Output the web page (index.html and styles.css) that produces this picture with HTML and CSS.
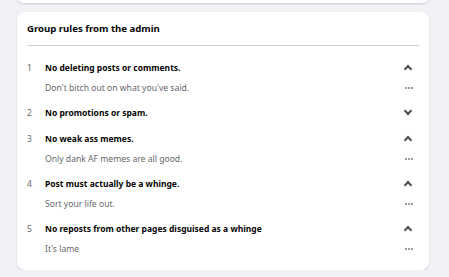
FILE: index.html
```html
<!DOCTYPE html>
<html lang="en">
<head>
  <meta charset="UTF-8" />
  <title>Group rules</title>
  <link rel="stylesheet" href="styles.css">
</head>
<body>
  <div class="card card-above"></div>

  <div class="card rules">
    <h2 class="rules-title">Group rules from the admin</h2>
    <div class="rules-list">
      <div class="rule">
        <div class="rule-head">
          <span class="rule-num">1</span>
          <span class="rule-name">No deleting posts or comments.</span>
          <span class="chev up"></span>
        </div>
        <div class="rule-desc">
          <span>Don't bitch out on what you've said.</span>
          <span class="dots"><i></i><i></i><i></i></span>
        </div>
      </div>
      <div class="rule">
        <div class="rule-head">
          <span class="rule-num">2</span>
          <span class="rule-name">No promotions or spam.</span>
          <span class="chev down"></span>
        </div>
      </div>
      <div class="rule">
        <div class="rule-head">
          <span class="rule-num">3</span>
          <span class="rule-name">No weak ass memes.</span>
          <span class="chev up"></span>
        </div>
        <div class="rule-desc">
          <span>Only dank AF memes are all good.</span>
          <span class="dots"><i></i><i></i><i></i></span>
        </div>
      </div>
      <div class="rule">
        <div class="rule-head">
          <span class="rule-num">4</span>
          <span class="rule-name">Post must actually be a whinge.</span>
          <span class="chev up"></span>
        </div>
        <div class="rule-desc">
          <span>Sort your life out.</span>
          <span class="dots"><i></i><i></i><i></i></span>
        </div>
      </div>
      <div class="rule">
        <div class="rule-head">
          <span class="rule-num">5</span>
          <span class="rule-name">No reposts from other pages disguised as a whinge</span>
          <span class="chev up"></span>
        </div>
        <div class="rule-desc">
          <span>It's lame</span>
          <span class="dots"><i></i><i></i><i></i></span>
        </div>
      </div>
    </div>
  </div>
</body>
</html>
```

FILE: styles.css
```css
body {
  margin: 0;
  padding: 0 20px 0 17px;
  background: #f0f2f5;
  font-family: 'Noto Sans', 'Open Sans', sans-serif;
  color: #050505;
}
.card {
  background: white;
  border-radius: 8px;
  box-shadow: 0 1px 2px rgba(0, 0, 0, 0.15);
}
.card-above {
  margin-top: -10px;
  height: 13px;
}
.rules {
  margin-top: 9px;
  padding: 0 10px 10px;
}
.rules-title {
  margin: 0;
  height: 33px;
  line-height: 33px;
  font-size: 9.6px;
  font-weight: 700;
  border-bottom: 1px solid #ced0d4;
}
.rules-list {
  padding-top: 8px;
}
.rule {
  padding: 2px 0;
}
.rule-head, .rule-desc {
  display: flex;
  align-items: center;
  padding-right: 6px;
}
.rule-head {
  height: 22px;
  font-size: 8.5px;
  font-weight: 700;
}
.rule-desc {
  height: 19px;
  padding-left: 18px;
  font-size: 8.6px;
  color: #65676b;
}
.rule-num {
  width: 18px;
  color: #65676b;
  font-weight: 400;
}
.rule-name, .rule-desc span:first-child {
  flex: 1;
}
.chev {
  width: 4px;
  height: 4px;
  border: solid #4b4f56;
  border-width: 2px 2px 0 0;
  margin-right: 2px;
}
.chev.up {
  transform: rotate(-45deg);
  margin-top: 3px;
}
.chev.down {
  transform: rotate(135deg);
  margin-top: -3px;
}
.dots {
  display: flex;
  gap: 1px;
}
.dots i {
  width: 2px;
  height: 2px;
  border-radius: 1px;
  background: #7a7d82;
}
```
